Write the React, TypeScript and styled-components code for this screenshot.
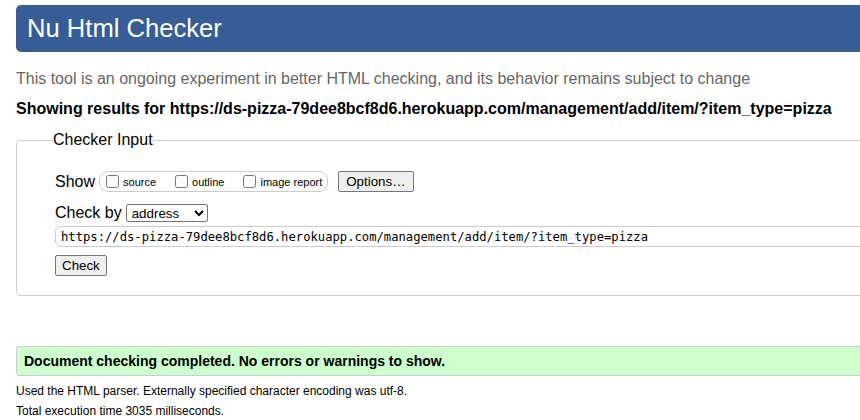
import React from 'react';
import styled, { createGlobalStyle } from 'styled-components';

const GlobalStyle = createGlobalStyle`
  html, body {
    margin: 0;
    padding: 0;
    background: #fff;
    overflow: hidden;
  }
  body {
    font-family: 'Liberation Sans', Arial, sans-serif;
    color: #000;
  }
`;

const Page = styled.div`
  width: 940px;
  padding: 5px 0 0 16px;
  display: flex;
  flex-direction: column;
`;

const Header = styled.h1`
  margin: 0;
  height: 47px;
  background: #365d95;
  border-radius: 5px;
  color: #fff;
  font-weight: normal;
  font-size: 25.6px;
  line-height: 47px;
  padding-left: 11px;
`;

const Intro = styled.p`
  margin: 17px 0 0;
  font-size: 16px;
  line-height: 20px;
  color: #666;
`;

const ResultsFor = styled.p`
  margin: 10px 0 0;
  font-size: 16px;
  line-height: 20px;
  font-weight: bold;
`;

const InputFieldset = styled.fieldset`
  margin: 12px 0 0;
  padding: 0;
  border: 1px solid #ccc;
  border-radius: 4px;
  min-width: 0;
`;

const Legend = styled.legend`
  margin-left: 36px;
  padding: 0;
  font-size: 16px;
  line-height: 18px;
`;

const FieldsetBody = styled.div`
  padding: 20px 0 19px 38px;
  display: flex;
  flex-direction: column;
  align-items: flex-start;
`;

const Row = styled.div<{ top: number }>`
  display: flex;
  align-items: center;
  margin-top: ${p => p.top}px;
  font-size: 16px;
`;

const Label = styled.span`
  margin-right: 4px;
`;

const ShowGroup = styled.div`
  display: flex;
  align-items: center;
  height: 19px;
  border: 1px solid #ccc;
  border-radius: 9px;
  padding: 0 5px 0 6px;
  margin-right: 10px;
`;

const CheckOption = styled.label<{ gap: number }>`
  display: flex;
  align-items: center;
  font-size: 11px;
  margin-right: ${p => p.gap}px;

  input {
    width: 13px;
    height: 13px;
    margin: 0 4px 0 0;
  }
`;

const NativeButton = styled.button`
  font-family: 'Liberation Sans', Arial, sans-serif;
  font-size: 13.33px;
  height: 21px;
  padding: 0 7px;
  line-height: 19px;
  background: #efefef;
  border: 1px solid #767676;
  border-radius: 2px;
  color: #000;
`;

const AddressSelect = styled.select`
  font-family: 'Liberation Sans', Arial, sans-serif;
  font-size: 13.33px;
  width: 82px;
  height: 18px;
  padding: 0 0 0 1px;
  border: 1px solid #767676;
  border-radius: 2px;
  background: #fff;
  color: #000;
`;

const UrlInput = styled.input`
  width: 900px;
  height: 21px;
  box-sizing: border-box;
  margin-top: 4px;
  border: 1px solid #ccc;
  border-radius: 6px;
  padding: 0 5px;
  font-family: 'DejaVu Sans Mono', 'Liberation Mono', monospace;
  font-size: 12.2px;
  color: #000;
`;

const CheckButton = styled(NativeButton)`
  margin-top: 8px;
  padding: 0 6px;
`;

const SuccessBox = styled.div`
  margin-top: 50px;
  height: 28px;
  border: 1px solid #ccc;
  border-radius: 3px;
  background: #ccffcc;
  font-weight: bold;
  font-size: 14px;
  line-height: 28px;
  padding-left: 7px;
`;

const Detail = styled.p<{ top: number }>`
  margin: ${p => p.top}px 0 0;
  font-size: 12px;
  line-height: 16px;
`;

const url = 'https://ds-pizza-79dee8bcf8d6.herokuapp.com/management/add/item/?item_type=pizza';

export default function App() {
  return (
    <>
      <GlobalStyle />
      <Page>
        <Header>Nu Html Checker</Header>
        <Intro>This tool is an ongoing experiment in better HTML checking, and its behavior remains subject to change</Intro>
        <ResultsFor>Showing results for {url}</ResultsFor>
        <InputFieldset>
          <Legend>Checker Input</Legend>
          <FieldsetBody>
            <Row top={2}>
              <Label>Show</Label>
              <ShowGroup>
                <CheckOption gap={19}><input type="checkbox" />source</CheckOption>
                <CheckOption gap={19}><input type="checkbox" />outline</CheckOption>
                <CheckOption gap={0}><input type="checkbox" />image report</CheckOption>
              </ShowGroup>
              <NativeButton>Options…</NativeButton>
            </Row>
            <Row top={12}>
              <Label>Check by</Label>
              <AddressSelect defaultValue="address">
                <option value="address">address</option>
                <option value="file">file upload</option>
                <option value="text">text input</option>
              </AddressSelect>
            </Row>
            <UrlInput defaultValue={url} />
            <CheckButton>Check</CheckButton>
          </FieldsetBody>
        </InputFieldset>
        <SuccessBox>Document checking completed. No errors or warnings to show.</SuccessBox>
        <Detail top={7}>Used the HTML parser. Externally specified character encoding was utf-8.</Detail>
        <Detail top={4}>Total execution time 3035 milliseconds.</Detail>
      </Page>
    </>
  );
}
